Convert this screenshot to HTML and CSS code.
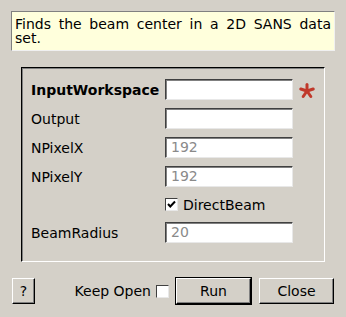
FILE: index.html
```html
<!DOCTYPE html>
<html lang="en">
<head>
    <meta charset="UTF-8">
    <title>FindCenterOfMassPosition</title>
    <link rel="stylesheet" href="styles.css">
</head>
<body>

    <!-- Description -->
    <div class="desc">Finds the beam center in a 2D SANS data set.</div>

    <!-- Properties -->
    <div class="group">
        <div class="label bold">InputWorkspace</div>
        <div class="field"></div>
        <svg class="star" width="16" height="16" viewBox="0 0 16 16">
            <g stroke="#c0392b" stroke-width="3" stroke-linecap="round">
                <line x1="8" y1="8" x2="8" y2="1.5"/>
                <line x1="8" y1="8" x2="14.2" y2="6"/>
                <line x1="8" y1="8" x2="11.8" y2="13.5"/>
                <line x1="8" y1="8" x2="4.2" y2="13.5"/>
                <line x1="8" y1="8" x2="1.8" y2="6"/>
            </g>
        </svg>

        <div class="label">Output</div>
        <div class="field"></div>
        <div></div>

        <div class="label">NPixelX</div>
        <div class="field dim">192</div>
        <div></div>

        <div class="label">NPixelY</div>
        <div class="field dim">192</div>
        <div></div>

        <div></div>
        <div class="check-row">
            <span class="check">
                <svg width="11" height="11" viewBox="0 0 11 11">
                    <path d="M2 5 L4.3 7.5 L9 2.5" fill="none" stroke="#000" stroke-width="2"/>
                </svg>
            </span>
            DirectBeam
        </div>
        <div></div>

        <div class="label">BeamRadius</div>
        <div class="field dim">20</div>
        <div></div>
    </div>

    <!-- Buttons -->
    <div class="buttons">
        <button class="btn help">?</button>
        <div class="spacer"></div>
        <span class="keep">Keep Open</span>
        <span class="check"></span>
        <button class="btn run">Run</button>
        <button class="btn">Close</button>
    </div>

</body>
</html>
```

FILE: styles.css
```css
* {
    margin: 0;
    padding: 0;
    box-sizing: border-box;
    font-family: 'DejaVu Sans', sans-serif;
}
body {
    background: #d4d0c8;
    color: #000;
    font-size: 14px;
    width: 346px;
    height: 317px;
    overflow: hidden;
}


.desc {
    margin: 11px 11px 0 11px;
    height: 40px;
    padding: 5px 3px 0 3px;
    background: #ffffdc;
    border: 1px solid;
    border-color: #808080 #f0f0f0 #f0f0f0 #808080;
    line-height: 14px;
    text-align: justify;
}


.group {
    margin: 16px 21px 0 21px;
    height: 195px;
    padding: 11px 0 0 9px;
    border: 1px solid;
    border-color: #000 #fff #fff #000;
    box-shadow: inset 1px 1px 0 #808080;
    display: grid;
    grid-template-columns: 134px 128px 22px;
    grid-template-rows: 21px 21px 21px 21px 19px 21px;
    row-gap: 8px;
    align-items: center;
}
.label {
    white-space: nowrap;
}
.bold {
    font-weight: bold;
}
.field {
    height: 21px;
    background: #fff;
    border: 1px solid;
    border-color: #404040 #e8e8e8 #e8e8e8 #404040;
    box-shadow: inset 1px 1px 0 #808080;
    padding: 1px 0 0 5px;
    line-height: 17px;
}
.dim {
    color: #8a8a8a;
}
.star {
    margin-left: 6px;
    margin-top: 2px;
}
.check-row {
    display: flex;
    align-items: center;
    gap: 5px;
}
.check {
    width: 13px;
    height: 13px;
    background: #fff;
    border: 1px solid;
    border-color: #404040 #e8e8e8 #e8e8e8 #404040;
    display: inline-flex;
    align-items: center;
    justify-content: center;
}


.buttons {
    display: flex;
    align-items: center;
    margin-top: 16px;
    padding: 0 12px;
}
.spacer {
    flex: 1;
}
.btn {
    height: 26px;
    width: 75px;
    background: #d4d0c8;
    border: 1px solid;
    border-color: #fff #000 #000 #fff;
    box-shadow: inset -1px -1px 0 #808080;
    font-size: 14px;
    color: #000;
}
.help {
    width: 23px;
}
.keep {
    margin-right: 5px;
}
.buttons .check {
    margin-right: 7px;
}
.run {
    outline: 1px solid #000;
    margin-right: 8px;
}
```
